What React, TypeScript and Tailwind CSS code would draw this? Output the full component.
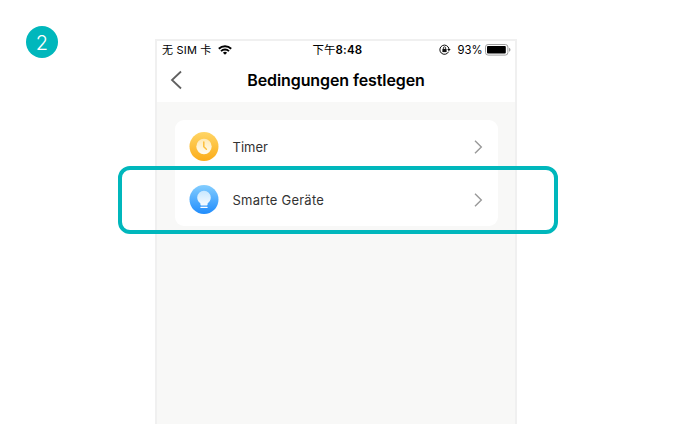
import type { ReactNode } from 'react';

function Chevron() {
  return (
    <svg className="h-[14px] w-[9px]" viewBox="0 0 9 14" fill="none" stroke="#999999" strokeWidth="1.4">
      <path d="M1 .8 7.3 7 1 13.2" />
    </svg>
  );
}

function ClockIcon() {
  return (
    <svg className="h-[29px] w-[30px]" viewBox="-.5 0 30 29">
      <defs>
        <linearGradient id="clockBg" x1="0" y1="0" x2="0" y2="1">
          <stop stopColor="#ffd566" />
          <stop offset="1" stopColor="#fbac18" />
        </linearGradient>
        <linearGradient id="clockFace" x1="0" y1="0" x2="0" y2="1">
          <stop stopColor="#ffe9b4" />
          <stop offset="1" stopColor="#fffcf3" />
        </linearGradient>
      </defs>
      <circle cx="14.5" cy="14.5" r="14.5" fill="url(#clockBg)" />
      <circle cx="14.5" cy="14.5" r="7.7" fill="url(#clockFace)" />
      <path d="M14.3 10v4.7l2.6 2.5" fill="none" stroke="#fdc03c" strokeWidth="1.5" strokeLinecap="round" />
    </svg>
  );
}

function BulbIcon() {
  return (
    <svg className="h-[29px] w-[30px]" viewBox="-.5 0 30 29">
      <defs>
        <linearGradient id="bulbBg" x1="0" y1="0" x2="0" y2="1">
          <stop stopColor="#84ceff" />
          <stop offset="1" stopColor="#208cfc" />
        </linearGradient>
        <linearGradient id="bulbGlass" x1="0" y1="0" x2="0" y2="1">
          <stop stopColor="#c8e8ff" />
          <stop offset="1" stopColor="#f6fbff" />
        </linearGradient>
      </defs>
      <circle cx="14.5" cy="14.5" r="14.5" fill="url(#bulbBg)" />
      <path
        d="M14.5 5.8a6.8 6.8 0 0 0-6.8 6.7c0 2.7 1.4 4.2 2.6 5.3.5.4.6.8.6 1.3v.4c0 .6.4.9.9.9h5.4c.5 0 .9-.3.9-.9v-.4c0-.5.1-.9.6-1.3 1.2-1.1 2.6-2.6 2.6-5.3a6.8 6.8 0 0 0-6.8-6.7Z"
        fill="url(#bulbGlass)"
      />
      <path d="M11.4 22.3h6.2" stroke="#ffffff" strokeWidth="1.3" strokeLinecap="round" />
    </svg>
  );
}

function WifiIcon() {
  return (
    <svg className="ml-[6px] h-[10px] w-[14px]" viewBox="0 0 14 10" fill="none" stroke="#000" strokeWidth="1.9">
      <path d="M.8 3.7a8.9 8.9 0 0 1 12.4 0" />
      <path d="M3 6.1a5.8 5.8 0 0 1 8 0" />
      <path d="M7 9.8 4.9 7.7a3.1 3.1 0 0 1 4.2 0Z" fill="#000" stroke="none" />
    </svg>
  );
}

function RotationLockIcon() {
  return (
    <svg className="h-[11px] w-[12px] -translate-y-px" viewBox="0 0 12 11" fill="none" stroke="#111">
      <path d="M9.6 7.7A4.6 4.6 0 1 1 10 5" strokeWidth="1" />
      <path d="M8.2 5h3.5L9.9 7.2Z" fill="#111" stroke="none" />
      <path d="M3.4 4.9h4.2v3.2H3.4Z" fill="#111" stroke="none" />
      <path d="M4.4 5V3.9a1.1 1.1 0 0 1 2.2 0V5" strokeWidth=".8" />
    </svg>
  );
}

function BatteryIcon() {
  return (
    <svg className="ml-[2.5px] h-[12px] w-[26px]" viewBox="0 0 26 12">
      <rect x=".5" y=".5" width="22.4" height="10.6" rx="2.6" fill="#fff" stroke="#a0a0a0" />
      <rect x="2" y="2" width="18.8" height="7.6" rx="1" fill="#000" />
      <path d="M24 3.8q1.5.6 1.5 2T24 7.8Z" fill="#a0a0a0" />
    </svg>
  );
}

function Row({ icon, label }: { icon: ReactNode; label: ReactNode }) {
  return (
    <div className="flex h-[53px] items-center pr-[15px] pl-[14.5px]">
      {icon}
      <div className="ml-[13.5px] flex-1 pt-[2px]">{label}</div>
      <Chevron />
    </div>
  );
}

export default function App() {
  return (
    <main className="relative h-[424px] w-[674px] overflow-hidden bg-white pt-[39px] pl-[155px] font-['Inter','Noto_Sans_CJK_SC',sans-serif] text-black">
      <div className="absolute top-[26px] left-[26px] flex size-8 items-center justify-center rounded-full bg-[#00b7bc] text-[20px] leading-8 font-light text-white">
        <span className="translate-y-px">2</span>
      </div>

      <section className="h-[385px] w-[362px] border-x-2 border-t-2 border-[#f0f0f0] bg-[#f8f8f7]">
        <header className="h-[60.5px] bg-white">
          <div className="grid h-[18px] grid-cols-[1fr_auto_1fr] items-center pr-[4px] pl-[5px] text-[11px] leading-[18px]">
            <div className="flex items-center whitespace-nowrap">
              <span className="tracking-[0.2px]">无 SIM 卡</span>
              <WifiIcon />
            </div>
            <div className="translate-x-px text-[11.5px] font-semibold tracking-[0.2px] whitespace-nowrap">
              <span className="font-normal tracking-normal">下午</span>8:48
            </div>
            <div className="flex items-center justify-end">
              <RotationLockIcon />
              <span className="ml-[6px] text-[11.3px]">93%</span>
              <BatteryIcon />
            </div>
          </div>
          <div className="grid h-[42px] grid-cols-[40px_1fr_40px] items-center">
            <svg className="ml-[13px] h-[20px] w-[12px]" viewBox="0 0 12 20" fill="none" stroke="#606060" strokeWidth="1.8">
              <path d="M11 1.5 2 10l9 8.5" />
            </svg>
            <h1 className="text-center text-[16px] font-semibold tracking-[-0.1px] whitespace-nowrap">
              Bedingungen festlegen
            </h1>
          </div>
        </header>

        <div className="mt-[18.5px] ml-[17.5px] w-[323px] rounded-[9px] bg-white text-[13px] text-[#333333]">
          <Row icon={<ClockIcon />} label={<span>Timer</span>} />
          <Row icon={<BulbIcon />} label={<span className="tracking-[0.22px]">Smarte Geräte</span>} />
        </div>
      </section>

      <div className="absolute top-[166px] left-[118px] h-[68px] w-[440px] rounded-[12px] border-4 border-[#00b7bc]" />
    </main>
  );
}
